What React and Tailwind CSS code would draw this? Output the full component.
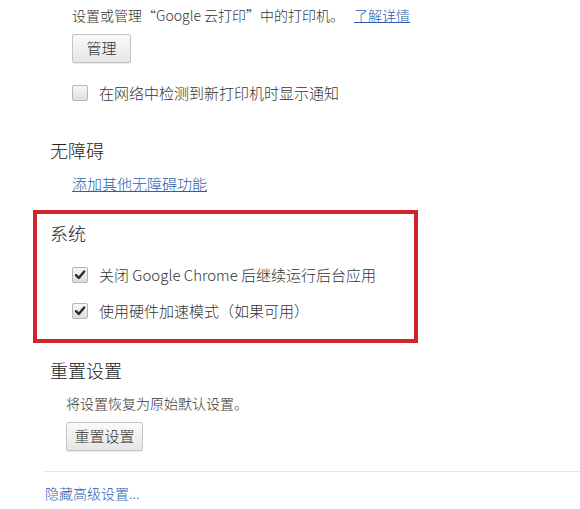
import React from 'react';

const font = { fontFamily: '"Microsoft YaHei", "Noto Sans CJK SC", "Noto Sans", sans-serif' };

const Box = ({ checked }) => (
  <span className="flex h-[16px] w-[16px] shrink-0 items-center justify-center rounded-[2px] border border-[#b5b5b5] bg-gradient-to-b from-[#f8f8f8] to-[#dedede]">
    {checked && (
      <svg width="12" height="12" viewBox="0 0 12 12">
        <path d="M2 6.2 L4.8 9 L10.2 2.4" fill="none" stroke="#2b2b2b" strokeWidth="2.4" strokeLinecap="round" strokeLinejoin="round" />
      </svg>
    )}
  </span>
);

const Check = ({ checked, label, className }) => (
  <div className={`flex h-[20px] items-center gap-[11px] ${className}`}>
    <Box checked={checked} />
    <span className="text-[15px] font-light text-[#333]">{label}</span>
  </div>
);

const Button = ({ children, className }) => (
  <button className={`flex h-[29px] items-center justify-center rounded-[2px] border border-[#c4c4c4] bg-gradient-to-b from-[#fafafa] to-[#e6e6e6] text-[15px] font-light text-[#333] shadow-[0_1px_0_rgba(0,0,0,0.08)] ${className}`}>
    {children}
  </button>
);

export default function App() {
  return (
    <div className="h-[509px] w-[580px] overflow-hidden bg-white" style={font}>
      <div className="mt-[5px] flex h-[20px] items-center pl-[72px] text-[14px] font-light text-[#333]">
        <span>设置或管理“Google 云打印”中的打印机。</span>
        <a className="ml-[10px] text-[#2a5db0] underline">了解详情</a>
      </div>
      <div className="mt-[9px] pl-[72px]">
        <Button className="w-[59px]">管理</Button>
      </div>
      <Check className="mt-[20px] pl-[72px]" label="在网络中检测到新打印机时显示通知" />

      <div className="mt-[35px] flex h-[24px] items-center pl-[50px] text-[18px] font-light text-[#222]">无障碍</div>
      <div className="mt-[12px] flex h-[20px] items-center pl-[72px]">
        <a className="text-[15px] font-light text-[#2a5db0] underline">添加其他无障碍功能</a>
      </div>

      <div className="ml-[33px] mt-[16px] h-[133px] w-[385px] border-4 border-[#d3232b]">
        <div className="mt-[7px] flex h-[24px] items-center pl-[13px] text-[18px] font-light text-[#222]">系统</div>
        <Check className="mt-[20px] pl-[35px]" checked label="关闭 Google Chrome 后继续运行后台应用" />
        <Check className="mt-[16px] pl-[35px]" checked label="使用硬件加速模式（如果可用）" />
      </div>

      <div className="mt-[15px] flex h-[24px] items-center pl-[50px] text-[18px] font-light text-[#222]">重置设置</div>
      <div className="mt-[11px] flex h-[20px] items-center pl-[66px] text-[14px] font-light text-[#333]">将设置恢复为原始默认设置。</div>
      <div className="mt-[9px] pl-[66px]">
        <Button className="w-[77px]">重置设置</Button>
      </div>

      <div className="ml-[44px] mt-[20px] h-px bg-[#e8e8e8]" />
      <div className="mt-[11px] flex h-[20px] items-center pl-[45px] text-[14px] font-light text-[#2a5db0]">隐藏高级设置...</div>
    </div>
  );
}
